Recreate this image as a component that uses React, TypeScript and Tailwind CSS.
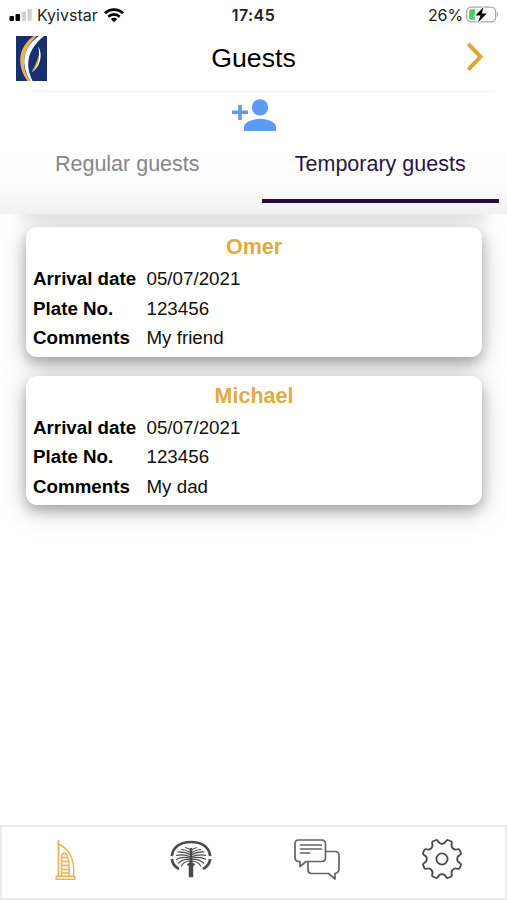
const guests = [
  { name: "Omer", date: "05/07/2021", plate: "123456", comments: "My friend" },
  { name: "Michael", date: "05/07/2021", plate: "123456", comments: "My dad" },
];

const StatusBar = () => {
  return (
    <div className="grid h-[30px] grid-cols-3 items-center px-[9px] font-['Inter',sans-serif] text-[16px] text-[#222]">
      <div className="flex items-center">
        <svg width="24" height="14" viewBox="0 0 24 14">
          <rect x="0.5" y="8" width="4.5" height="5" rx="1" fill="#000" />
          <rect x="6.5" y="6" width="4.5" height="7" rx="1" fill="#000" />
          <rect x="12.7" y="3.5" width="4.3" height="9.5" rx="1" fill="#d2d2d2" />
          <rect x="18.5" y="1" width="4.3" height="12" rx="1" fill="#d2d2d2" />
        </svg>
        <span className="ml-[4px]">Kyivstar</span>
        <svg className="ml-[6px]" width="20" height="15" viewBox="0 0 20 15" fill="none" stroke="#000">
          <path d="M1 5.2 A13 13 0 0 1 19 5.2" strokeWidth="2.9" />
          <path d="M4.3 8.7 A8.3 8.3 0 0 1 15.7 8.7" strokeWidth="2.7" />
          <path d="M10 14.2 L6.8 11.1 A4.6 4.6 0 0 1 13.2 11.1 Z" fill="#000" stroke="none" />
        </svg>
      </div>
      <span className="text-center font-semibold tracking-[0.4px]">17:45</span>
      <div className="flex items-center justify-end">
        <span className="tracking-[-0.1px]">26%</span>
        <svg className="-mr-[1px] ml-[3px]" width="33" height="18" viewBox="0 0 33 18">
          <rect x="0.7" y="1.2" width="29" height="14.6" rx="4.5" fill="#fff" stroke="#aaa" strokeWidth="1.3" />
          <path d="M31.2 6 q2 2.5 0 5 z" fill="#aaa" />
          <path d="M5 3.3 h4 v10.4 h-4 q-2 0 -2 -2 v-6.4 q0 -2 2 -2z" fill="#55cc60" />
          <path
            d="M17.5 1 L9.5 9.5 h5 L12 16.5 L20.8 7.5 h-5 z"
            fill="#000"
            stroke="#fff"
            strokeWidth="1.8"
            paintOrder="stroke"
          />
        </svg>
      </div>
    </div>
  );
};

const Logo = () => {
  return (
    <svg width="31" height="45" viewBox="0 0 30 44" preserveAspectRatio="none" fill="none">
      <rect width="30" height="44" fill="#182f70" />
      <path d="M17 0 C1 12 1 29 11 44 H14 C4 30 6 14 20 0 Z" fill="#e5b456" />
      <path d="M22 0 C5 13 5 29 14 44 H16 C9 29 10 14 27 0 Z" fill="#fff" />
      <path d="M21.5 10 C27 20 22 31 16 35 C20 29 24 21 21.5 10 Z" fill="#fff" />
      <path d="M22 20 C22 27 19 32 15.5 35 C18 31 20 26 22 20 Z" fill="#e5b456" stroke="#e5b456" strokeWidth="0.5" />
    </svg>
  );
};

const Header = () => {
  return (
    <div className="grid h-[61px] grid-cols-[60px_1fr_60px] items-start">
      <div className="pt-[6px] pl-[16px]">
        <Logo />
      </div>
      <h1 className="pt-[10px] text-center text-[26.7px] leading-9 text-black">Guests</h1>
      <svg className="mt-[12px] ml-[19px]" width="20" height="30" viewBox="0 0 20 30" fill="none">
        <path d="M3.4 3.2 L14.5 14.8 L3.4 26.4" stroke="#e2a438" strokeWidth="4" strokeLinecap="round" strokeLinejoin="miter" />
      </svg>
    </div>
  );
};

const Tabs = () => {
  return (
    <div className="flex h-[123px] flex-col bg-linear-to-b from-white from-50% via-[#fbfbfb] via-80% to-[#f1f1f2]">
      <div className="mr-3 ml-8 h-px bg-[#f4f4f4]" />
      <svg className="mt-[7px] ml-[231px]" width="46" height="34" viewBox="0 0 46 34" fill="#5b9bf4">
        <circle cx="29" cy="8.4" r="8.2" />
        <path d="M13 32 v-4 c0 -5.5 10 -8.2 16 -8.2 s16 2.7 16 8.2 v4 z" />
        <path d="M7.2 6 h3.6 v5.6 h6.2 v3.4 h-6.2 v6 h-3.6 v-6 h-6.2 v-3.4 h6.2 z" />
      </svg>
      <div className="grid grow grid-cols-2 px-[8px] text-[21.5px] leading-[26px]">
        <div className="pt-[18px] pr-[7px] text-center text-[#85868c]">Regular guests</div>
        <div className="ml-[8px] pt-[18px] text-center text-[#2c1543]">
          Temporary guests
          <div className="mt-[22px] h-[4px] bg-[#270b42]" />
        </div>
      </div>
    </div>
  );
};

const GuestCard = ({ guest }: { guest: (typeof guests)[number] }) => {
  const rows = [
    ["Arrival date", guest.date],
    ["Plate No.", guest.plate],
    ["Comments", guest.comments],
  ];
  return (
    <div className="relative h-[129.5px] rounded-[11px] bg-[#fffffd] px-[7px] pt-[4px] shadow-[0_6px_13px_rgba(0,0,0,0.28),0_5px_32px_rgba(0,0,0,0.17)]">
      <h2 className="text-center text-[21.5px] leading-[33.3px] font-bold text-[#e2aa43]">{guest.name}</h2>
      {rows.map(([label, value]) => (
        <div key={label} className="flex h-[29.7px] items-center text-[18.75px] text-[#111]">
          <span className="w-[113.5px] font-bold text-black">{label}</span>
          <span>{value}</span>
        </div>
      ))}
    </div>
  );
};

const TowerIcon = () => {
  return (
    <svg width="24" height="44" viewBox="0 0 24 44" fill="none" stroke="#e6b45d" strokeWidth="1.4">
      <path d="M4.5 38 V2" strokeWidth="1.8" />
      <path d="M4.5 6 C15 11 21 22 19.5 38" />
      <path d="M7.5 38 V18 C9 14 12 14 13.5 18 C15.5 25 15.6 31 15 38" fill="#fcf4e6" />
      <path d="M8 19.5 h5.5 M8 23.5 h6.5 M8 27.5 h7 M8 31.5 h7.2 M8 35 h7.2" />
      <path d="M2.2 38.2 h18.6 v3.2 h-18.6 z" fill="#faedd5" />
    </svg>
  );
};

const PalmIcon = () => {
  return (
    <svg width="42" height="38" viewBox="0 0 42 38" fill="none" stroke="#4b4b4d">
      <path d="M1.8 16 C3 6.5 11 2 21 2 S39 6.5 40.2 16" strokeWidth="2.7" />
      <path d="M1.8 19 C2.5 23.5 5 27 9 29 M40.2 19 C39.5 23.5 37 27 33 29" strokeWidth="2.7" />
      <path d="M21 8 V24" strokeWidth="2.4" />
      <path d="M19 37 V26 L17 24.5 L21 21.5 L25 24.5 L23 26 V37 Z" fill="#4b4b4d" strokeWidth="0.5" />
      {[1, -1].map((side) => (
        <g key={side} transform={side < 0 ? "translate(42 0) scale(-1 1)" : undefined} strokeWidth="1.2">
          <path d="M21 10.5 C19 8.5 17.5 8 15 7.5" />
          <path d="M21 13 C17 10.5 14 9.5 11 9.5" />
          <path d="M21 15 C16 12.5 11 11.5 7.5 12" />
          <path d="M21 17 C15 14.5 10 14.5 6 15.5" />
          <path d="M21 18.5 C15 16.5 10 17.5 6 19.5" />
          <path d="M21 20 C16 18.5 11 20.5 8 23.5" />
          <path d="M21 21.5 C17 20.5 13 23 11 26.5" />
        </g>
      ))}
    </svg>
  );
};

const ChatIcon = () => {
  return (
    <svg width="46" height="42" viewBox="0 0 46 42" fill="none" stroke="#646466" strokeWidth="1.7" strokeLinejoin="round">
      <path d="M4.5 1 H27.5 Q31.5 1 31.5 5 V18.5 Q31.5 22.5 27.5 22.5 H12 L6 27.5 V22.5 H4.5 Q1 22 1 18.5 V5 Q1 1 4.5 1 Z" />
      <path d="M31.5 12.5 H41 Q45 12.5 45 16.5 V30 Q45 33.5 41 34.5 V40 L34.5 34.5 H18 Q14 34.5 14 30.5 V22.5" />
      <path d="M6.5 6 H27.5 M6.5 10 H27.5 M6.5 14 H15.5" strokeLinecap="round" />
    </svg>
  );
};

const GearIcon = () => {
  return (
    <svg width="42" height="42" viewBox="-21 -21 42 42" fill="none" stroke="#4b4b4d" strokeWidth="1.8" strokeLinejoin="round">
      <path d={gearPath} />
      <circle r="5.6" />
    </svg>
  );
};

const BottomNav = () => {
  return (
    <nav className="grid h-[75px] grid-cols-4 items-start border-2 border-[#ebebec] bg-white pt-[9px]">
      <div className="flex justify-center pt-[2px] pl-[2px]">
        <TowerIcon />
      </div>
      <div className="flex justify-center pt-[4px]">
        <PalmIcon />
      </div>
      <div className="flex justify-center pt-[3px] pl-[1px]">
        <ChatIcon />
      </div>
      <div className="flex justify-center pt-[2px]">
        <GearIcon />
      </div>
    </nav>
  );
};

const App = () => {
  return (
    <main className="flex h-[900px] w-full flex-col overflow-hidden bg-white font-['Liberation_Sans',Arial,sans-serif]">
      <StatusBar />
      <Header />
      <Tabs />
      <section className="grow overflow-hidden pr-[25px] pl-[26px]">
        {/* soft shade under the header */}
        <div className="h-0 shadow-[0_0_14px_5px_rgba(0,0,0,0.16)]" />
        <div className="flex flex-col gap-[19px] pt-[13px]">
          {guests.map((guest) => (
            <GuestCard key={guest.name} guest={guest} />
          ))}
        </div>
      </section>
      <BottomNav />
    </main>
  );
};
export default App;

const polar = (radius: number, degrees: number) => {
  const rad = (degrees * Math.PI) / 180;
  return `${(radius * Math.cos(rad)).toFixed(2)} ${(radius * Math.sin(rad)).toFixed(2)}`;
};

// eight teeth with a rounded notch between each pair
const gearPath =
  Array.from({ length: 8 }, (_, i) => {
    const a = i * 45 + 22.5;
    return `${i === 0 ? "M" : "L"}${polar(18.2, a - 10)} Q${polar(20, a - 8.5)} ${polar(19.8, a - 4)} L${polar(19.8, a + 4)} Q${polar(20, a + 8.5)} ${polar(18.2, a + 10)} A4.3 4.3 0 0 0 ${polar(18.2, a + 35)}`;
  }).join(" ") + " Z";
